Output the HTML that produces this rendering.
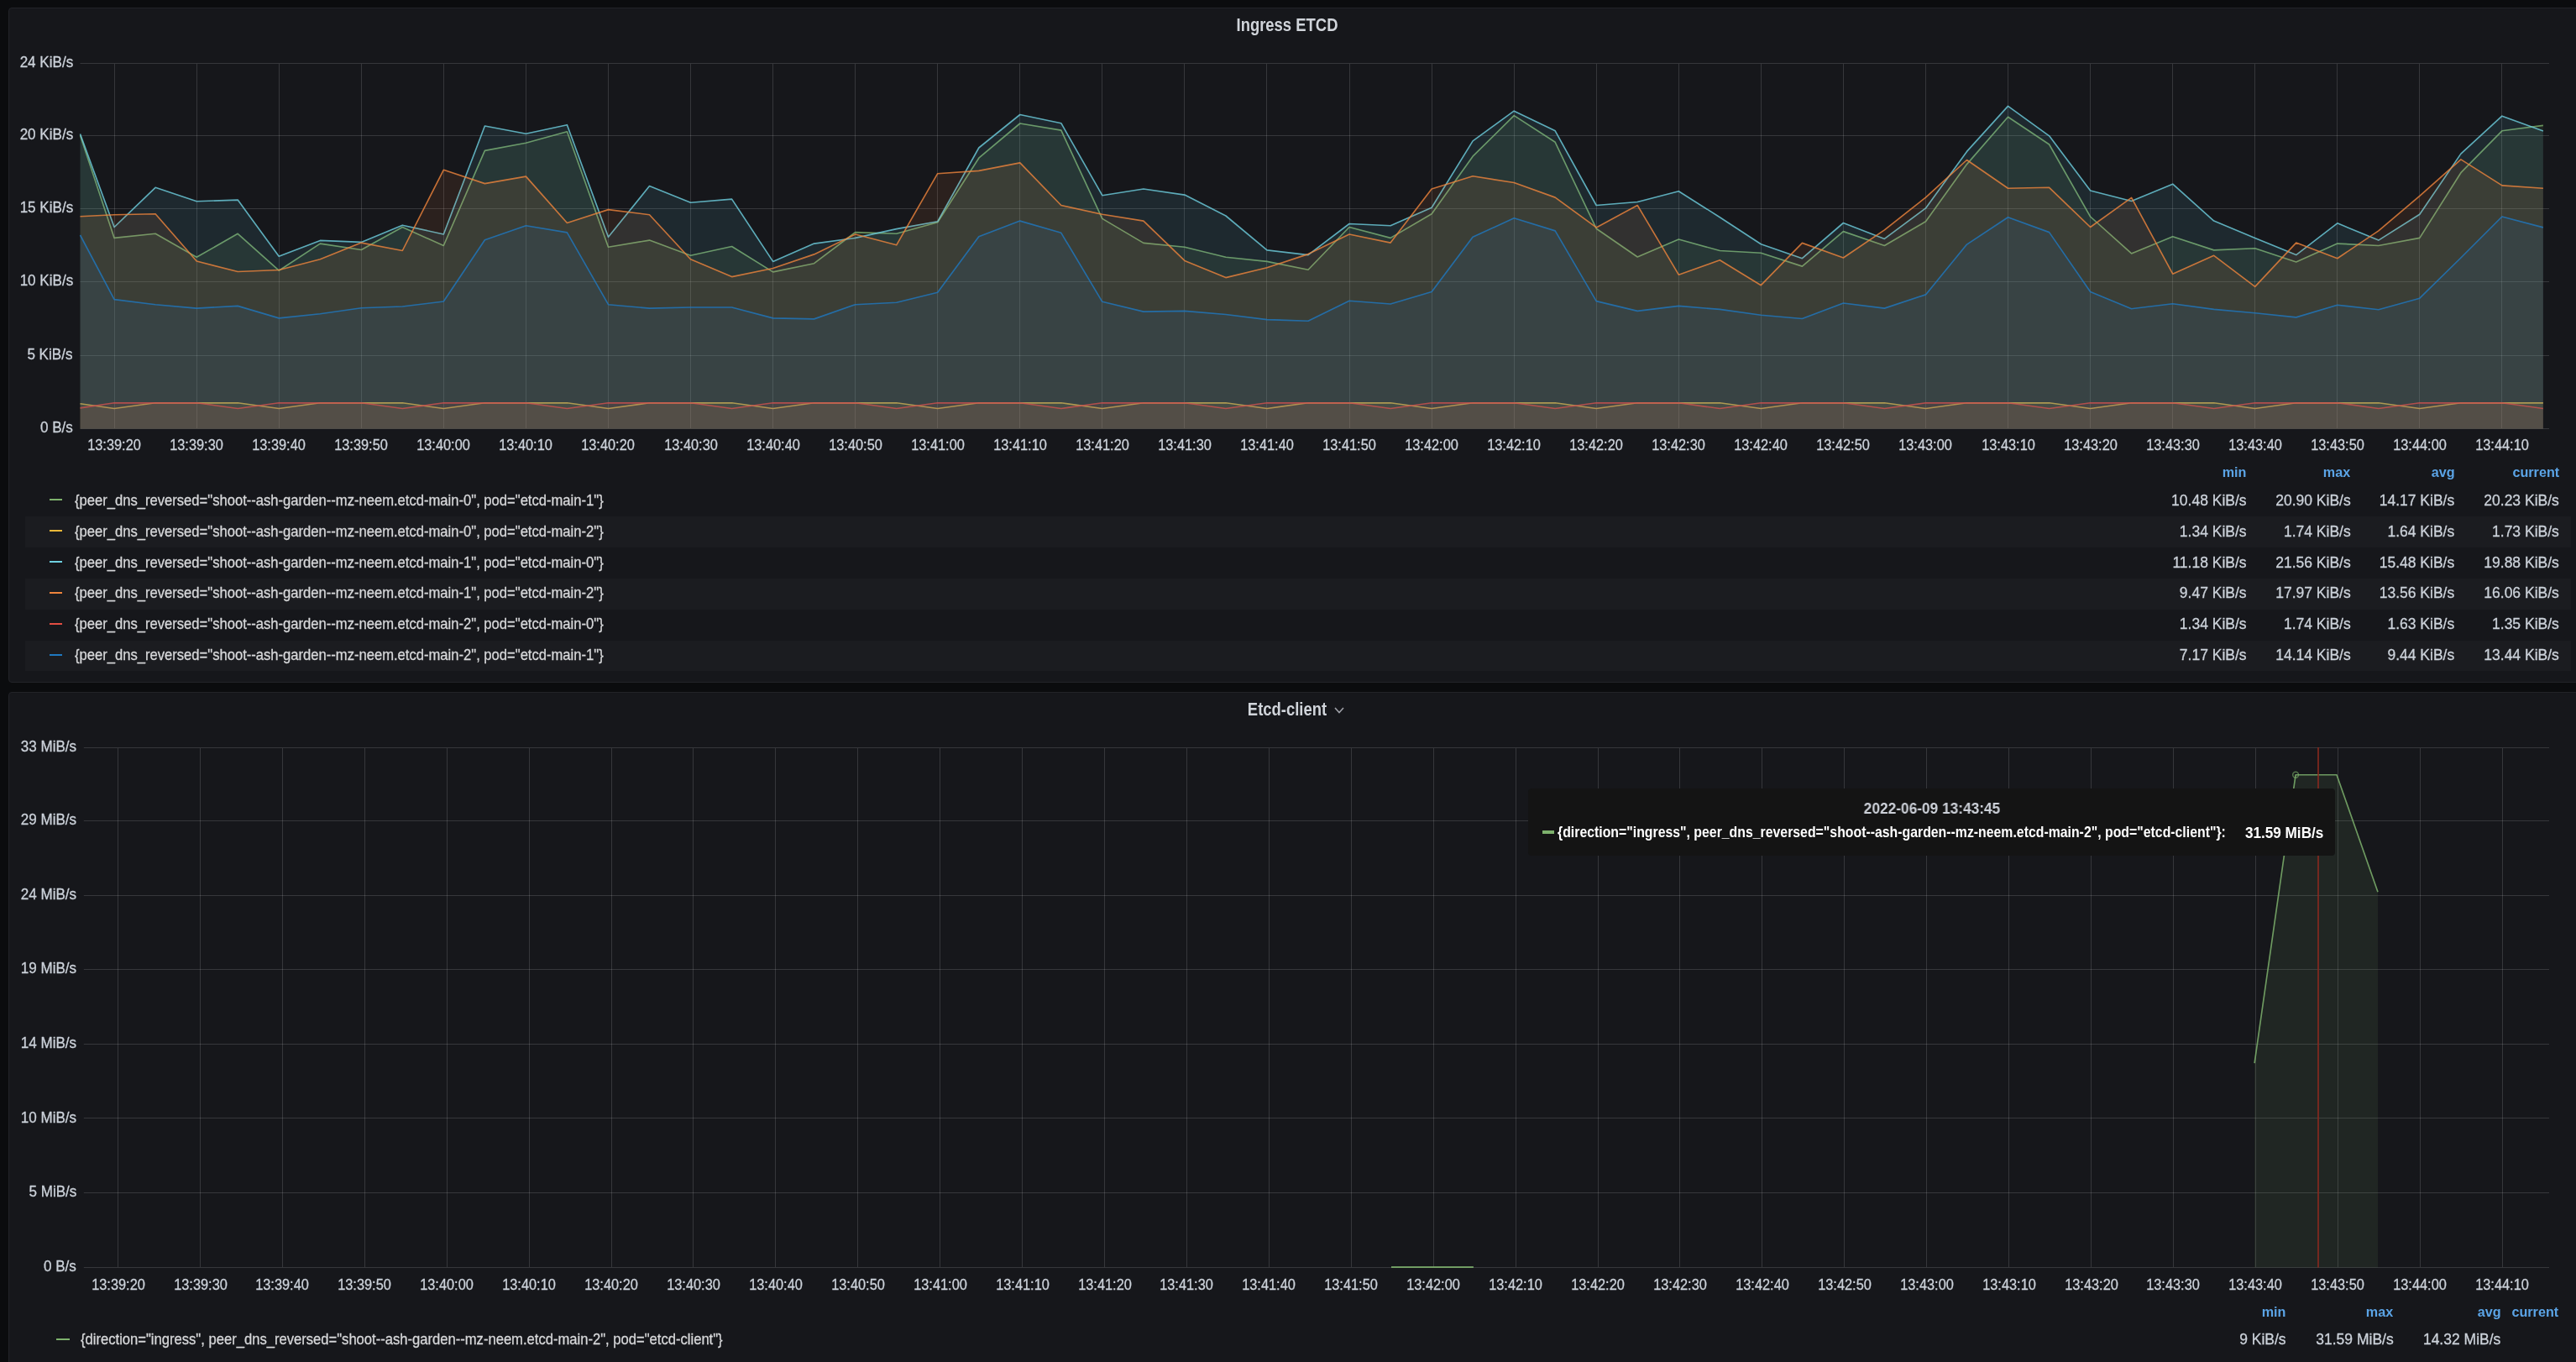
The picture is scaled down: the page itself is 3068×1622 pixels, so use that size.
<!DOCTYPE html><html><head><meta charset="utf-8"><style>
*{margin:0;padding:0;box-sizing:border-box}
html,body{width:3068px;height:1622px;overflow:hidden;background:#0b0c0e;font-family:"Liberation Sans", sans-serif}
.panel{position:absolute;background:#16171b;border:1px solid #222328;border-radius:4px}
.stripe{position:absolute;background:#1b1c20}
.mk{position:absolute}
#txt{position:absolute;left:0;top:0;width:3068px;height:1622px;will-change:transform}
.t{position:absolute;white-space:pre;line-height:1;top:0}
</style></head><body>
<div class="panel" style="left:10px;top:9px;width:3080px;height:804px"></div>
<div class="panel" style="left:10px;top:824px;width:3080px;height:820px"></div>
<div class="stripe" style="left:30px;top:615.1px;width:3032px;height:36.9px"></div>
<div class="stripe" style="left:30px;top:688.8px;width:3032px;height:36.9px"></div>
<div class="stripe" style="left:30px;top:762.5px;width:3032px;height:36.9px"></div>
<svg width="3068" height="1622" style="position:absolute;left:0;top:0">
<line x1="95.5" y1="75.5" x2="3036" y2="75.5" stroke="rgba(255,255,255,0.14)" stroke-width="1"/>
<line x1="95.5" y1="161.5" x2="3036" y2="161.5" stroke="rgba(255,255,255,0.14)" stroke-width="1"/>
<line x1="95.5" y1="248.5" x2="3036" y2="248.5" stroke="rgba(255,255,255,0.14)" stroke-width="1"/>
<line x1="95.5" y1="335.5" x2="3036" y2="335.5" stroke="rgba(255,255,255,0.14)" stroke-width="1"/>
<line x1="95.5" y1="423.5" x2="3036" y2="423.5" stroke="rgba(255,255,255,0.14)" stroke-width="1"/>
<line x1="95.5" y1="510.5" x2="3036" y2="510.5" stroke="rgba(255,255,255,0.14)" stroke-width="1"/>
<line x1="136.5" y1="76" x2="136.5" y2="510" stroke="rgba(255,255,255,0.14)" stroke-width="1"/>
<line x1="234.5" y1="76" x2="234.5" y2="510" stroke="rgba(255,255,255,0.14)" stroke-width="1"/>
<line x1="332.5" y1="76" x2="332.5" y2="510" stroke="rgba(255,255,255,0.14)" stroke-width="1"/>
<line x1="430.5" y1="76" x2="430.5" y2="510" stroke="rgba(255,255,255,0.14)" stroke-width="1"/>
<line x1="528.5" y1="76" x2="528.5" y2="510" stroke="rgba(255,255,255,0.14)" stroke-width="1"/>
<line x1="626.5" y1="76" x2="626.5" y2="510" stroke="rgba(255,255,255,0.14)" stroke-width="1"/>
<line x1="724.5" y1="76" x2="724.5" y2="510" stroke="rgba(255,255,255,0.14)" stroke-width="1"/>
<line x1="822.5" y1="76" x2="822.5" y2="510" stroke="rgba(255,255,255,0.14)" stroke-width="1"/>
<line x1="920.5" y1="76" x2="920.5" y2="510" stroke="rgba(255,255,255,0.14)" stroke-width="1"/>
<line x1="1018.5" y1="76" x2="1018.5" y2="510" stroke="rgba(255,255,255,0.14)" stroke-width="1"/>
<line x1="1116.5" y1="76" x2="1116.5" y2="510" stroke="rgba(255,255,255,0.14)" stroke-width="1"/>
<line x1="1214.5" y1="76" x2="1214.5" y2="510" stroke="rgba(255,255,255,0.14)" stroke-width="1"/>
<line x1="1312.5" y1="76" x2="1312.5" y2="510" stroke="rgba(255,255,255,0.14)" stroke-width="1"/>
<line x1="1410.5" y1="76" x2="1410.5" y2="510" stroke="rgba(255,255,255,0.14)" stroke-width="1"/>
<line x1="1508.5" y1="76" x2="1508.5" y2="510" stroke="rgba(255,255,255,0.14)" stroke-width="1"/>
<line x1="1607.5" y1="76" x2="1607.5" y2="510" stroke="rgba(255,255,255,0.14)" stroke-width="1"/>
<line x1="1705.5" y1="76" x2="1705.5" y2="510" stroke="rgba(255,255,255,0.14)" stroke-width="1"/>
<line x1="1803.5" y1="76" x2="1803.5" y2="510" stroke="rgba(255,255,255,0.14)" stroke-width="1"/>
<line x1="1901.5" y1="76" x2="1901.5" y2="510" stroke="rgba(255,255,255,0.14)" stroke-width="1"/>
<line x1="1999.5" y1="76" x2="1999.5" y2="510" stroke="rgba(255,255,255,0.14)" stroke-width="1"/>
<line x1="2097.5" y1="76" x2="2097.5" y2="510" stroke="rgba(255,255,255,0.14)" stroke-width="1"/>
<line x1="2195.5" y1="76" x2="2195.5" y2="510" stroke="rgba(255,255,255,0.14)" stroke-width="1"/>
<line x1="2293.5" y1="76" x2="2293.5" y2="510" stroke="rgba(255,255,255,0.14)" stroke-width="1"/>
<line x1="2391.5" y1="76" x2="2391.5" y2="510" stroke="rgba(255,255,255,0.14)" stroke-width="1"/>
<line x1="2489.5" y1="76" x2="2489.5" y2="510" stroke="rgba(255,255,255,0.14)" stroke-width="1"/>
<line x1="2587.5" y1="76" x2="2587.5" y2="510" stroke="rgba(255,255,255,0.14)" stroke-width="1"/>
<line x1="2685.5" y1="76" x2="2685.5" y2="510" stroke="rgba(255,255,255,0.14)" stroke-width="1"/>
<line x1="2783.5" y1="76" x2="2783.5" y2="510" stroke="rgba(255,255,255,0.14)" stroke-width="1"/>
<line x1="2881.5" y1="76" x2="2881.5" y2="510" stroke="rgba(255,255,255,0.14)" stroke-width="1"/>
<line x1="2979.5" y1="76" x2="2979.5" y2="510" stroke="rgba(255,255,255,0.14)" stroke-width="1"/>
<polygon points="95.5,161.2 136.1,283.4 185.1,278.3 234.2,306.3 283.2,278.3 332.2,322.2 381.3,290.1 430.3,297.5 479.3,270.5 528.3,292.5 577.4,179.4 626.4,170.3 675.4,156.8 724.5,294.2 773.5,286.1 822.5,304.3 871.6,293.5 920.6,323.9 969.6,313.7 1018.7,276.6 1067.7,278.3 1116.7,264.8 1165.8,188.2 1214.8,147.0 1263.8,155.1 1312.8,260.4 1361.9,289.4 1410.9,294.2 1459.9,306.3 1509.0,311.4 1558.0,321.2 1607.0,270.5 1656.1,283.4 1705.1,254.7 1754.1,186.2 1803.2,137.6 1852.2,169.3 1901.2,272.2 1950.2,306.0 1999.3,285.0 2048.3,298.5 2097.3,301.2 2146.4,317.1 2195.4,275.6 2244.4,292.5 2293.5,263.8 2342.5,195.6 2391.5,139.2 2440.6,172.0 2489.6,258.0 2538.6,301.9 2587.7,281.7 2636.7,297.9 2685.7,295.8 2734.7,312.0 2783.8,290.1 2832.8,292.5 2881.8,283.4 2930.9,205.7 2979.9,155.8 3028.9,149.4 3028.9,510.5 95.5,510.5" fill="#7EB26D" fill-opacity="0.1"/>
<polyline points="95.5,161.2 136.1,283.4 185.1,278.3 234.2,306.3 283.2,278.3 332.2,322.2 381.3,290.1 430.3,297.5 479.3,270.5 528.3,292.5 577.4,179.4 626.4,170.3 675.4,156.8 724.5,294.2 773.5,286.1 822.5,304.3 871.6,293.5 920.6,323.9 969.6,313.7 1018.7,276.6 1067.7,278.3 1116.7,264.8 1165.8,188.2 1214.8,147.0 1263.8,155.1 1312.8,260.4 1361.9,289.4 1410.9,294.2 1459.9,306.3 1509.0,311.4 1558.0,321.2 1607.0,270.5 1656.1,283.4 1705.1,254.7 1754.1,186.2 1803.2,137.6 1852.2,169.3 1901.2,272.2 1950.2,306.0 1999.3,285.0 2048.3,298.5 2097.3,301.2 2146.4,317.1 2195.4,275.6 2244.4,292.5 2293.5,263.8 2342.5,195.6 2391.5,139.2 2440.6,172.0 2489.6,258.0 2538.6,301.9 2587.7,281.7 2636.7,297.9 2685.7,295.8 2734.7,312.0 2783.8,290.1 2832.8,292.5 2881.8,283.4 2930.9,205.7 2979.9,155.8 3028.9,149.4" fill="none" stroke="#7EB26D" stroke-width="1.65" stroke-opacity="0.8" stroke-linejoin="round"/>
<polygon points="95.5,480.8 136.1,486.5 185.1,479.8 234.2,479.8 283.2,479.8 332.2,486.5 381.3,479.8 430.3,479.8 479.3,479.8 528.3,486.5 577.4,479.8 626.4,479.8 675.4,479.8 724.5,486.5 773.5,479.8 822.5,479.8 871.6,479.8 920.6,486.5 969.6,479.8 1018.7,479.8 1067.7,479.8 1116.7,486.5 1165.8,479.8 1214.8,479.8 1263.8,479.8 1312.8,486.5 1361.9,479.8 1410.9,479.8 1459.9,479.8 1509.0,486.5 1558.0,479.8 1607.0,479.8 1656.1,479.8 1705.1,486.5 1754.1,479.8 1803.2,479.8 1852.2,479.8 1901.2,486.5 1950.2,479.8 1999.3,479.8 2048.3,479.8 2097.3,486.5 2146.4,479.8 2195.4,479.8 2244.4,479.8 2293.5,486.5 2342.5,479.8 2391.5,479.8 2440.6,479.8 2489.6,486.5 2538.6,479.8 2587.7,479.8 2636.7,479.8 2685.7,486.5 2734.7,479.8 2783.8,479.8 2832.8,479.8 2881.8,486.5 2930.9,479.8 2979.9,479.8 3028.9,479.8 3028.9,510.5 95.5,510.5" fill="#EAB839" fill-opacity="0.1"/>
<polyline points="95.5,480.8 136.1,486.5 185.1,479.8 234.2,479.8 283.2,479.8 332.2,486.5 381.3,479.8 430.3,479.8 479.3,479.8 528.3,486.5 577.4,479.8 626.4,479.8 675.4,479.8 724.5,486.5 773.5,479.8 822.5,479.8 871.6,479.8 920.6,486.5 969.6,479.8 1018.7,479.8 1067.7,479.8 1116.7,486.5 1165.8,479.8 1214.8,479.8 1263.8,479.8 1312.8,486.5 1361.9,479.8 1410.9,479.8 1459.9,479.8 1509.0,486.5 1558.0,479.8 1607.0,479.8 1656.1,479.8 1705.1,486.5 1754.1,479.8 1803.2,479.8 1852.2,479.8 1901.2,486.5 1950.2,479.8 1999.3,479.8 2048.3,479.8 2097.3,486.5 2146.4,479.8 2195.4,479.8 2244.4,479.8 2293.5,486.5 2342.5,479.8 2391.5,479.8 2440.6,479.8 2489.6,486.5 2538.6,479.8 2587.7,479.8 2636.7,479.8 2685.7,486.5 2734.7,479.8 2783.8,479.8 2832.8,479.8 2881.8,486.5 2930.9,479.8 2979.9,479.8 3028.9,479.8" fill="none" stroke="#EAB839" stroke-width="1.65" stroke-opacity="0.8" stroke-linejoin="round"/>
<polygon points="95.5,159.5 136.1,270.5 185.1,223.3 234.2,239.8 283.2,238.1 332.2,305.3 381.3,286.4 430.3,288.4 479.3,268.2 528.3,279.0 577.4,150.0 626.4,159.2 675.4,148.7 724.5,282.3 773.5,221.6 822.5,241.2 871.6,237.1 920.6,311.4 969.6,290.1 1018.7,283.4 1067.7,272.6 1116.7,263.8 1165.8,176.0 1214.8,136.5 1263.8,146.7 1312.8,232.7 1361.9,225.0 1410.9,232.1 1459.9,257.0 1509.0,297.9 1558.0,303.6 1607.0,266.5 1656.1,268.8 1705.1,247.2 1754.1,167.9 1803.2,132.2 1852.2,155.8 1901.2,244.5 1950.2,240.5 1999.3,227.7 2048.3,258.7 2097.3,290.8 2146.4,307.7 2195.4,265.5 2244.4,284.4 2293.5,247.9 2342.5,180.4 2391.5,126.4 2440.6,161.8 2489.6,227.0 2538.6,239.5 2587.7,219.2 2636.7,263.1 2685.7,283.4 2734.7,303.6 2783.8,265.8 2832.8,286.1 2881.8,255.3 2930.9,183.1 2979.9,138.2 3028.9,156.1 3028.9,510.5 95.5,510.5" fill="#6ED0E0" fill-opacity="0.1"/>
<polyline points="95.5,159.5 136.1,270.5 185.1,223.3 234.2,239.8 283.2,238.1 332.2,305.3 381.3,286.4 430.3,288.4 479.3,268.2 528.3,279.0 577.4,150.0 626.4,159.2 675.4,148.7 724.5,282.3 773.5,221.6 822.5,241.2 871.6,237.1 920.6,311.4 969.6,290.1 1018.7,283.4 1067.7,272.6 1116.7,263.8 1165.8,176.0 1214.8,136.5 1263.8,146.7 1312.8,232.7 1361.9,225.0 1410.9,232.1 1459.9,257.0 1509.0,297.9 1558.0,303.6 1607.0,266.5 1656.1,268.8 1705.1,247.2 1754.1,167.9 1803.2,132.2 1852.2,155.8 1901.2,244.5 1950.2,240.5 1999.3,227.7 2048.3,258.7 2097.3,290.8 2146.4,307.7 2195.4,265.5 2244.4,284.4 2293.5,247.9 2342.5,180.4 2391.5,126.4 2440.6,161.8 2489.6,227.0 2538.6,239.5 2587.7,219.2 2636.7,263.1 2685.7,283.4 2734.7,303.6 2783.8,265.8 2832.8,286.1 2881.8,255.3 2930.9,183.1 2979.9,138.2 3028.9,156.1" fill="none" stroke="#6ED0E0" stroke-width="1.65" stroke-opacity="0.8" stroke-linejoin="round"/>
<polygon points="95.5,257.7 136.1,255.7 185.1,254.7 234.2,311.0 283.2,323.5 332.2,321.5 381.3,308.7 430.3,289.1 479.3,298.5 528.3,202.3 577.4,218.6 626.4,210.1 675.4,265.5 724.5,249.6 773.5,255.7 822.5,308.7 871.6,329.6 920.6,319.5 969.6,302.9 1018.7,279.0 1067.7,291.8 1116.7,206.7 1165.8,203.4 1214.8,193.9 1263.8,244.5 1312.8,255.3 1361.9,263.1 1410.9,310.4 1459.9,330.6 1509.0,318.8 1558.0,302.6 1607.0,279.0 1656.1,289.1 1705.1,225.0 1754.1,209.8 1803.2,217.5 1852.2,235.1 1901.2,270.9 1950.2,244.5 1999.3,327.2 2048.3,309.7 2097.3,339.7 2146.4,289.4 2195.4,307.0 2244.4,273.9 2293.5,235.1 2342.5,190.5 2391.5,224.3 2440.6,223.3 2489.6,270.5 2538.6,235.4 2587.7,326.2 2636.7,304.3 2685.7,341.4 2734.7,289.1 2783.8,307.7 2832.8,274.9 2881.8,233.4 2930.9,189.9 2979.9,220.9 3028.9,224.3 3028.9,510.5 95.5,510.5" fill="#EF843C" fill-opacity="0.1"/>
<polyline points="95.5,257.7 136.1,255.7 185.1,254.7 234.2,311.0 283.2,323.5 332.2,321.5 381.3,308.7 430.3,289.1 479.3,298.5 528.3,202.3 577.4,218.6 626.4,210.1 675.4,265.5 724.5,249.6 773.5,255.7 822.5,308.7 871.6,329.6 920.6,319.5 969.6,302.9 1018.7,279.0 1067.7,291.8 1116.7,206.7 1165.8,203.4 1214.8,193.9 1263.8,244.5 1312.8,255.3 1361.9,263.1 1410.9,310.4 1459.9,330.6 1509.0,318.8 1558.0,302.6 1607.0,279.0 1656.1,289.1 1705.1,225.0 1754.1,209.8 1803.2,217.5 1852.2,235.1 1901.2,270.9 1950.2,244.5 1999.3,327.2 2048.3,309.7 2097.3,339.7 2146.4,289.4 2195.4,307.0 2244.4,273.9 2293.5,235.1 2342.5,190.5 2391.5,224.3 2440.6,223.3 2489.6,270.5 2538.6,235.4 2587.7,326.2 2636.7,304.3 2685.7,341.4 2734.7,289.1 2783.8,307.7 2832.8,274.9 2881.8,233.4 2930.9,189.9 2979.9,220.9 3028.9,224.3" fill="none" stroke="#EF843C" stroke-width="1.65" stroke-opacity="0.8" stroke-linejoin="round"/>
<polygon points="95.5,485.9 136.1,479.8 185.1,479.8 234.2,479.8 283.2,486.5 332.2,479.8 381.3,479.8 430.3,479.8 479.3,486.5 528.3,479.8 577.4,479.8 626.4,479.8 675.4,486.5 724.5,479.8 773.5,479.8 822.5,479.8 871.6,486.5 920.6,479.8 969.6,479.8 1018.7,479.8 1067.7,486.5 1116.7,479.8 1165.8,479.8 1214.8,479.8 1263.8,486.5 1312.8,479.8 1361.9,479.8 1410.9,479.8 1459.9,486.5 1509.0,479.8 1558.0,479.8 1607.0,479.8 1656.1,486.5 1705.1,479.8 1754.1,479.8 1803.2,479.8 1852.2,486.5 1901.2,479.8 1950.2,479.8 1999.3,479.8 2048.3,486.5 2097.3,479.8 2146.4,479.8 2195.4,479.8 2244.4,486.5 2293.5,479.8 2342.5,479.8 2391.5,479.8 2440.6,486.5 2489.6,479.8 2538.6,479.8 2587.7,479.8 2636.7,486.5 2685.7,479.8 2734.7,479.8 2783.8,479.8 2832.8,486.5 2881.8,479.8 2930.9,479.8 2979.9,479.8 3028.9,486.5 3028.9,510.5 95.5,510.5" fill="#E24D42" fill-opacity="0.1"/>
<polyline points="95.5,485.9 136.1,479.8 185.1,479.8 234.2,479.8 283.2,486.5 332.2,479.8 381.3,479.8 430.3,479.8 479.3,486.5 528.3,479.8 577.4,479.8 626.4,479.8 675.4,486.5 724.5,479.8 773.5,479.8 822.5,479.8 871.6,486.5 920.6,479.8 969.6,479.8 1018.7,479.8 1067.7,486.5 1116.7,479.8 1165.8,479.8 1214.8,479.8 1263.8,486.5 1312.8,479.8 1361.9,479.8 1410.9,479.8 1459.9,486.5 1509.0,479.8 1558.0,479.8 1607.0,479.8 1656.1,486.5 1705.1,479.8 1754.1,479.8 1803.2,479.8 1852.2,486.5 1901.2,479.8 1950.2,479.8 1999.3,479.8 2048.3,486.5 2097.3,479.8 2146.4,479.8 2195.4,479.8 2244.4,486.5 2293.5,479.8 2342.5,479.8 2391.5,479.8 2440.6,486.5 2489.6,479.8 2538.6,479.8 2587.7,479.8 2636.7,486.5 2685.7,479.8 2734.7,479.8 2783.8,479.8 2832.8,486.5 2881.8,479.8 2930.9,479.8 2979.9,479.8 3028.9,486.5" fill="none" stroke="#E24D42" stroke-width="1.65" stroke-opacity="0.8" stroke-linejoin="round"/>
<polygon points="95.5,280.0 136.1,356.6 185.1,362.7 234.2,367.1 283.2,364.4 332.2,378.9 381.3,373.8 430.3,366.7 479.3,365.0 528.3,359.0 577.4,285.7 626.4,268.8 675.4,276.9 724.5,362.7 773.5,367.1 822.5,366.0 871.6,366.0 920.6,378.9 969.6,379.9 1018.7,362.7 1067.7,360.3 1116.7,348.2 1165.8,281.7 1214.8,263.1 1263.8,277.3 1312.8,359.3 1361.9,371.1 1410.9,370.4 1459.9,374.5 1509.0,380.6 1558.0,382.2 1607.0,358.3 1656.1,362.0 1705.1,347.5 1754.1,282.3 1803.2,259.7 1852.2,274.9 1901.2,358.6 1950.2,370.4 1999.3,364.4 2048.3,368.4 2097.3,375.2 2146.4,379.5 2195.4,361.0 2244.4,367.1 2293.5,350.9 2342.5,291.1 2391.5,258.7 2440.6,276.6 2489.6,347.5 2538.6,367.7 2587.7,361.7 2636.7,368.4 2685.7,372.8 2734.7,377.9 2783.8,363.3 2832.8,368.7 2881.8,355.2 2930.9,307.0 2979.9,258.0 3028.9,270.9 3028.9,510.5 95.5,510.5" fill="#1F78C1" fill-opacity="0.1"/>
<polyline points="95.5,280.0 136.1,356.6 185.1,362.7 234.2,367.1 283.2,364.4 332.2,378.9 381.3,373.8 430.3,366.7 479.3,365.0 528.3,359.0 577.4,285.7 626.4,268.8 675.4,276.9 724.5,362.7 773.5,367.1 822.5,366.0 871.6,366.0 920.6,378.9 969.6,379.9 1018.7,362.7 1067.7,360.3 1116.7,348.2 1165.8,281.7 1214.8,263.1 1263.8,277.3 1312.8,359.3 1361.9,371.1 1410.9,370.4 1459.9,374.5 1509.0,380.6 1558.0,382.2 1607.0,358.3 1656.1,362.0 1705.1,347.5 1754.1,282.3 1803.2,259.7 1852.2,274.9 1901.2,358.6 1950.2,370.4 1999.3,364.4 2048.3,368.4 2097.3,375.2 2146.4,379.5 2195.4,361.0 2244.4,367.1 2293.5,350.9 2342.5,291.1 2391.5,258.7 2440.6,276.6 2489.6,347.5 2538.6,367.7 2587.7,361.7 2636.7,368.4 2685.7,372.8 2734.7,377.9 2783.8,363.3 2832.8,368.7 2881.8,355.2 2930.9,307.0 2979.9,258.0 3028.9,270.9" fill="none" stroke="#1F78C1" stroke-width="1.65" stroke-opacity="0.8" stroke-linejoin="round"/>
<line x1="99.8" y1="890.5" x2="3036" y2="890.5" stroke="rgba(255,255,255,0.14)" stroke-width="1"/>
<line x1="99.8" y1="977.5" x2="3036" y2="977.5" stroke="rgba(255,255,255,0.14)" stroke-width="1"/>
<line x1="99.8" y1="1066.5" x2="3036" y2="1066.5" stroke="rgba(255,255,255,0.14)" stroke-width="1"/>
<line x1="99.8" y1="1154.5" x2="3036" y2="1154.5" stroke="rgba(255,255,255,0.14)" stroke-width="1"/>
<line x1="99.8" y1="1243.5" x2="3036" y2="1243.5" stroke="rgba(255,255,255,0.14)" stroke-width="1"/>
<line x1="99.8" y1="1331.5" x2="3036" y2="1331.5" stroke="rgba(255,255,255,0.14)" stroke-width="1"/>
<line x1="99.8" y1="1420.5" x2="3036" y2="1420.5" stroke="rgba(255,255,255,0.14)" stroke-width="1"/>
<line x1="99.8" y1="1509.5" x2="3036" y2="1509.5" stroke="rgba(255,255,255,0.14)" stroke-width="1"/>
<line x1="140.5" y1="891" x2="140.5" y2="1509" stroke="rgba(255,255,255,0.14)" stroke-width="1"/>
<line x1="238.5" y1="891" x2="238.5" y2="1509" stroke="rgba(255,255,255,0.14)" stroke-width="1"/>
<line x1="336.5" y1="891" x2="336.5" y2="1509" stroke="rgba(255,255,255,0.14)" stroke-width="1"/>
<line x1="434.5" y1="891" x2="434.5" y2="1509" stroke="rgba(255,255,255,0.14)" stroke-width="1"/>
<line x1="532.5" y1="891" x2="532.5" y2="1509" stroke="rgba(255,255,255,0.14)" stroke-width="1"/>
<line x1="630.5" y1="891" x2="630.5" y2="1509" stroke="rgba(255,255,255,0.14)" stroke-width="1"/>
<line x1="728.5" y1="891" x2="728.5" y2="1509" stroke="rgba(255,255,255,0.14)" stroke-width="1"/>
<line x1="825.5" y1="891" x2="825.5" y2="1509" stroke="rgba(255,255,255,0.14)" stroke-width="1"/>
<line x1="923.5" y1="891" x2="923.5" y2="1509" stroke="rgba(255,255,255,0.14)" stroke-width="1"/>
<line x1="1021.5" y1="891" x2="1021.5" y2="1509" stroke="rgba(255,255,255,0.14)" stroke-width="1"/>
<line x1="1119.5" y1="891" x2="1119.5" y2="1509" stroke="rgba(255,255,255,0.14)" stroke-width="1"/>
<line x1="1217.5" y1="891" x2="1217.5" y2="1509" stroke="rgba(255,255,255,0.14)" stroke-width="1"/>
<line x1="1315.5" y1="891" x2="1315.5" y2="1509" stroke="rgba(255,255,255,0.14)" stroke-width="1"/>
<line x1="1413.5" y1="891" x2="1413.5" y2="1509" stroke="rgba(255,255,255,0.14)" stroke-width="1"/>
<line x1="1511.5" y1="891" x2="1511.5" y2="1509" stroke="rgba(255,255,255,0.14)" stroke-width="1"/>
<line x1="1609.5" y1="891" x2="1609.5" y2="1509" stroke="rgba(255,255,255,0.14)" stroke-width="1"/>
<line x1="1707.5" y1="891" x2="1707.5" y2="1509" stroke="rgba(255,255,255,0.14)" stroke-width="1"/>
<line x1="1805.5" y1="891" x2="1805.5" y2="1509" stroke="rgba(255,255,255,0.14)" stroke-width="1"/>
<line x1="1903.5" y1="891" x2="1903.5" y2="1509" stroke="rgba(255,255,255,0.14)" stroke-width="1"/>
<line x1="2000.5" y1="891" x2="2000.5" y2="1509" stroke="rgba(255,255,255,0.14)" stroke-width="1"/>
<line x1="2098.5" y1="891" x2="2098.5" y2="1509" stroke="rgba(255,255,255,0.14)" stroke-width="1"/>
<line x1="2196.5" y1="891" x2="2196.5" y2="1509" stroke="rgba(255,255,255,0.14)" stroke-width="1"/>
<line x1="2294.5" y1="891" x2="2294.5" y2="1509" stroke="rgba(255,255,255,0.14)" stroke-width="1"/>
<line x1="2392.5" y1="891" x2="2392.5" y2="1509" stroke="rgba(255,255,255,0.14)" stroke-width="1"/>
<line x1="2490.5" y1="891" x2="2490.5" y2="1509" stroke="rgba(255,255,255,0.14)" stroke-width="1"/>
<line x1="2588.5" y1="891" x2="2588.5" y2="1509" stroke="rgba(255,255,255,0.14)" stroke-width="1"/>
<line x1="2686.5" y1="891" x2="2686.5" y2="1509" stroke="rgba(255,255,255,0.14)" stroke-width="1"/>
<line x1="2784.5" y1="891" x2="2784.5" y2="1509" stroke="rgba(255,255,255,0.14)" stroke-width="1"/>
<line x1="2882.5" y1="891" x2="2882.5" y2="1509" stroke="rgba(255,255,255,0.14)" stroke-width="1"/>
<line x1="2980.5" y1="891" x2="2980.5" y2="1509" stroke="rgba(255,255,255,0.14)" stroke-width="1"/>
<polygon points="2685.1,1266.1 2734.1,922.7 2783.0,922.7 2832.0,1062.2 2832.0,1509.4 2685.1,1509.4" fill="#7EB26D" fill-opacity="0.1"/>
<polyline points="2685.1,1266.1 2734.1,922.7 2783.0,922.7 2832.0,1062.2" fill="none" stroke="#7EB26D" stroke-width="1.65" stroke-opacity="0.85" stroke-linejoin="round"/>
<line x1="1657.0" y1="1509" x2="1754.9" y2="1509" stroke="#7EB26D" stroke-opacity="0.85" stroke-width="2"/>
<line x1="2761.0" y1="890" x2="2761.0" y2="1509.4" stroke="#8a2a1f" stroke-width="1.6"/>
<circle cx="2734.1" cy="922.7" r="3.4" fill="none" stroke="#7EB26D" stroke-opacity="0.6" stroke-width="1.5"/>
</svg>
<div style="position:absolute;left:1820px;top:939px;width:961px;height:80px;background:#141414;border-radius:4px"></div>
<div class="mk" style="left:1837px;top:989px;width:14px;height:4px;background:#7EB26D"></div>
<div class="mk" style="left:59px;top:594.4px;width:15px;height:2px;background:#7EB26D"></div>
<div class="mk" style="left:59px;top:631.2px;width:15px;height:2px;background:#EAB839"></div>
<div class="mk" style="left:59px;top:668.1px;width:15px;height:2px;background:#6ED0E0"></div>
<div class="mk" style="left:59px;top:705.0px;width:15px;height:2px;background:#EF843C"></div>
<div class="mk" style="left:59px;top:741.8px;width:15px;height:2px;background:#E24D42"></div>
<div class="mk" style="left:59px;top:778.6px;width:15px;height:2px;background:#1F78C1"></div>
<div class="mk" style="left:66.5px;top:1594px;width:16px;height:2px;background:#7EB26D"></div>
<svg style="position:absolute;left:1588px;top:841px" width="14" height="10"><polyline points="2,2 7,7.5 12,2" fill="none" stroke="#9fa1a8" stroke-width="1.6"/></svg>
<div id="txt">
<div class="t" style="left:533.00px;width:2000px;text-align:center;top:19.80px;font-size:21.5px;color:#d0d4da;font-weight:bold;transform:scaleX(0.858);transform-origin:center top;">Ingress ETCD</div>
<div class="t" style="left:533.40px;width:2000px;text-align:center;top:834.60px;font-size:21.5px;color:#d0d4da;font-weight:bold;transform:scaleX(0.858);transform-origin:center top;">Etcd-client</div>
<div class="t" style="right:2981.20px;top:65.79px;font-size:17.5px;color:#ccd2da;font-weight:normal;transform:scaleX(0.975);transform-origin:right top;-webkit-text-stroke:0.3px #ccd2da;">24 KiB/s</div>
<div class="t" style="right:2981.20px;top:151.69px;font-size:17.5px;color:#ccd2da;font-weight:normal;transform:scaleX(0.975);transform-origin:right top;-webkit-text-stroke:0.3px #ccd2da;">20 KiB/s</div>
<div class="t" style="right:2981.20px;top:238.99px;font-size:17.5px;color:#ccd2da;font-weight:normal;transform:scaleX(0.975);transform-origin:right top;-webkit-text-stroke:0.3px #ccd2da;">15 KiB/s</div>
<div class="t" style="right:2981.20px;top:326.29px;font-size:17.5px;color:#ccd2da;font-weight:normal;transform:scaleX(0.975);transform-origin:right top;-webkit-text-stroke:0.3px #ccd2da;">10 KiB/s</div>
<div class="t" style="right:2981.20px;top:413.59px;font-size:17.5px;color:#ccd2da;font-weight:normal;transform:scaleX(0.975);transform-origin:right top;-webkit-text-stroke:0.3px #ccd2da;">5 KiB/s</div>
<div class="t" style="right:2981.20px;top:500.89px;font-size:17.5px;color:#ccd2da;font-weight:normal;transform:scaleX(0.975);transform-origin:right top;-webkit-text-stroke:0.3px #ccd2da;">0 B/s</div>
<div class="t" style="right:2977.10px;top:880.99px;font-size:17.5px;color:#ccd2da;font-weight:normal;transform:scaleX(0.975);transform-origin:right top;-webkit-text-stroke:0.3px #ccd2da;">33 MiB/s</div>
<div class="t" style="right:2977.10px;top:968.09px;font-size:17.5px;color:#ccd2da;font-weight:normal;transform:scaleX(0.975);transform-origin:right top;-webkit-text-stroke:0.3px #ccd2da;">29 MiB/s</div>
<div class="t" style="right:2977.10px;top:1056.79px;font-size:17.5px;color:#ccd2da;font-weight:normal;transform:scaleX(0.975);transform-origin:right top;-webkit-text-stroke:0.3px #ccd2da;">24 MiB/s</div>
<div class="t" style="right:2977.10px;top:1145.39px;font-size:17.5px;color:#ccd2da;font-weight:normal;transform:scaleX(0.975);transform-origin:right top;-webkit-text-stroke:0.3px #ccd2da;">19 MiB/s</div>
<div class="t" style="right:2977.10px;top:1234.09px;font-size:17.5px;color:#ccd2da;font-weight:normal;transform:scaleX(0.975);transform-origin:right top;-webkit-text-stroke:0.3px #ccd2da;">14 MiB/s</div>
<div class="t" style="right:2977.10px;top:1322.69px;font-size:17.5px;color:#ccd2da;font-weight:normal;transform:scaleX(0.975);transform-origin:right top;-webkit-text-stroke:0.3px #ccd2da;">10 MiB/s</div>
<div class="t" style="right:2977.10px;top:1411.39px;font-size:17.5px;color:#ccd2da;font-weight:normal;transform:scaleX(0.975);transform-origin:right top;-webkit-text-stroke:0.3px #ccd2da;">5 MiB/s</div>
<div class="t" style="right:2977.10px;top:1500.19px;font-size:17.5px;color:#ccd2da;font-weight:normal;transform:scaleX(0.975);transform-origin:right top;-webkit-text-stroke:0.3px #ccd2da;">0 B/s</div>
<div class="t" style="left:-863.90px;width:2000px;text-align:center;top:521.89px;font-size:17.5px;color:#ccd2da;font-weight:normal;transform:scaleX(0.935);transform-origin:center top;-webkit-text-stroke:0.3px #ccd2da;">13:39:20</div>
<div class="t" style="left:-859.40px;width:2000px;text-align:center;top:1521.79px;font-size:17.5px;color:#ccd2da;font-weight:normal;transform:scaleX(0.935);transform-origin:center top;-webkit-text-stroke:0.3px #ccd2da;">13:39:20</div>
<div class="t" style="left:-765.84px;width:2000px;text-align:center;top:521.89px;font-size:17.5px;color:#ccd2da;font-weight:normal;transform:scaleX(0.935);transform-origin:center top;-webkit-text-stroke:0.3px #ccd2da;">13:39:30</div>
<div class="t" style="left:-761.49px;width:2000px;text-align:center;top:1521.79px;font-size:17.5px;color:#ccd2da;font-weight:normal;transform:scaleX(0.935);transform-origin:center top;-webkit-text-stroke:0.3px #ccd2da;">13:39:30</div>
<div class="t" style="left:-667.78px;width:2000px;text-align:center;top:521.89px;font-size:17.5px;color:#ccd2da;font-weight:normal;transform:scaleX(0.935);transform-origin:center top;-webkit-text-stroke:0.3px #ccd2da;">13:39:40</div>
<div class="t" style="left:-663.57px;width:2000px;text-align:center;top:1521.79px;font-size:17.5px;color:#ccd2da;font-weight:normal;transform:scaleX(0.935);transform-origin:center top;-webkit-text-stroke:0.3px #ccd2da;">13:39:40</div>
<div class="t" style="left:-569.71px;width:2000px;text-align:center;top:521.89px;font-size:17.5px;color:#ccd2da;font-weight:normal;transform:scaleX(0.935);transform-origin:center top;-webkit-text-stroke:0.3px #ccd2da;">13:39:50</div>
<div class="t" style="left:-565.66px;width:2000px;text-align:center;top:1521.79px;font-size:17.5px;color:#ccd2da;font-weight:normal;transform:scaleX(0.935);transform-origin:center top;-webkit-text-stroke:0.3px #ccd2da;">13:39:50</div>
<div class="t" style="left:-471.65px;width:2000px;text-align:center;top:521.89px;font-size:17.5px;color:#ccd2da;font-weight:normal;transform:scaleX(0.935);transform-origin:center top;-webkit-text-stroke:0.3px #ccd2da;">13:40:00</div>
<div class="t" style="left:-467.74px;width:2000px;text-align:center;top:1521.79px;font-size:17.5px;color:#ccd2da;font-weight:normal;transform:scaleX(0.935);transform-origin:center top;-webkit-text-stroke:0.3px #ccd2da;">13:40:00</div>
<div class="t" style="left:-373.59px;width:2000px;text-align:center;top:521.89px;font-size:17.5px;color:#ccd2da;font-weight:normal;transform:scaleX(0.935);transform-origin:center top;-webkit-text-stroke:0.3px #ccd2da;">13:40:10</div>
<div class="t" style="left:-369.83px;width:2000px;text-align:center;top:1521.79px;font-size:17.5px;color:#ccd2da;font-weight:normal;transform:scaleX(0.935);transform-origin:center top;-webkit-text-stroke:0.3px #ccd2da;">13:40:10</div>
<div class="t" style="left:-275.53px;width:2000px;text-align:center;top:521.89px;font-size:17.5px;color:#ccd2da;font-weight:normal;transform:scaleX(0.935);transform-origin:center top;-webkit-text-stroke:0.3px #ccd2da;">13:40:20</div>
<div class="t" style="left:-271.92px;width:2000px;text-align:center;top:1521.79px;font-size:17.5px;color:#ccd2da;font-weight:normal;transform:scaleX(0.935);transform-origin:center top;-webkit-text-stroke:0.3px #ccd2da;">13:40:20</div>
<div class="t" style="left:-177.47px;width:2000px;text-align:center;top:521.89px;font-size:17.5px;color:#ccd2da;font-weight:normal;transform:scaleX(0.935);transform-origin:center top;-webkit-text-stroke:0.3px #ccd2da;">13:40:30</div>
<div class="t" style="left:-174.00px;width:2000px;text-align:center;top:1521.79px;font-size:17.5px;color:#ccd2da;font-weight:normal;transform:scaleX(0.935);transform-origin:center top;-webkit-text-stroke:0.3px #ccd2da;">13:40:30</div>
<div class="t" style="left:-79.40px;width:2000px;text-align:center;top:521.89px;font-size:17.5px;color:#ccd2da;font-weight:normal;transform:scaleX(0.935);transform-origin:center top;-webkit-text-stroke:0.3px #ccd2da;">13:40:40</div>
<div class="t" style="left:-76.09px;width:2000px;text-align:center;top:1521.79px;font-size:17.5px;color:#ccd2da;font-weight:normal;transform:scaleX(0.935);transform-origin:center top;-webkit-text-stroke:0.3px #ccd2da;">13:40:40</div>
<div class="t" style="left:18.66px;width:2000px;text-align:center;top:521.89px;font-size:17.5px;color:#ccd2da;font-weight:normal;transform:scaleX(0.935);transform-origin:center top;-webkit-text-stroke:0.3px #ccd2da;">13:40:50</div>
<div class="t" style="left:21.83px;width:2000px;text-align:center;top:1521.79px;font-size:17.5px;color:#ccd2da;font-weight:normal;transform:scaleX(0.935);transform-origin:center top;-webkit-text-stroke:0.3px #ccd2da;">13:40:50</div>
<div class="t" style="left:116.72px;width:2000px;text-align:center;top:521.89px;font-size:17.5px;color:#ccd2da;font-weight:normal;transform:scaleX(0.935);transform-origin:center top;-webkit-text-stroke:0.3px #ccd2da;">13:41:00</div>
<div class="t" style="left:119.74px;width:2000px;text-align:center;top:1521.79px;font-size:17.5px;color:#ccd2da;font-weight:normal;transform:scaleX(0.935);transform-origin:center top;-webkit-text-stroke:0.3px #ccd2da;">13:41:00</div>
<div class="t" style="left:214.78px;width:2000px;text-align:center;top:521.89px;font-size:17.5px;color:#ccd2da;font-weight:normal;transform:scaleX(0.935);transform-origin:center top;-webkit-text-stroke:0.3px #ccd2da;">13:41:10</div>
<div class="t" style="left:217.65px;width:2000px;text-align:center;top:1521.79px;font-size:17.5px;color:#ccd2da;font-weight:normal;transform:scaleX(0.935);transform-origin:center top;-webkit-text-stroke:0.3px #ccd2da;">13:41:10</div>
<div class="t" style="left:312.84px;width:2000px;text-align:center;top:521.89px;font-size:17.5px;color:#ccd2da;font-weight:normal;transform:scaleX(0.935);transform-origin:center top;-webkit-text-stroke:0.3px #ccd2da;">13:41:20</div>
<div class="t" style="left:315.57px;width:2000px;text-align:center;top:1521.79px;font-size:17.5px;color:#ccd2da;font-weight:normal;transform:scaleX(0.935);transform-origin:center top;-webkit-text-stroke:0.3px #ccd2da;">13:41:20</div>
<div class="t" style="left:410.91px;width:2000px;text-align:center;top:521.89px;font-size:17.5px;color:#ccd2da;font-weight:normal;transform:scaleX(0.935);transform-origin:center top;-webkit-text-stroke:0.3px #ccd2da;">13:41:30</div>
<div class="t" style="left:413.48px;width:2000px;text-align:center;top:1521.79px;font-size:17.5px;color:#ccd2da;font-weight:normal;transform:scaleX(0.935);transform-origin:center top;-webkit-text-stroke:0.3px #ccd2da;">13:41:30</div>
<div class="t" style="left:508.97px;width:2000px;text-align:center;top:521.89px;font-size:17.5px;color:#ccd2da;font-weight:normal;transform:scaleX(0.935);transform-origin:center top;-webkit-text-stroke:0.3px #ccd2da;">13:41:40</div>
<div class="t" style="left:511.40px;width:2000px;text-align:center;top:1521.79px;font-size:17.5px;color:#ccd2da;font-weight:normal;transform:scaleX(0.935);transform-origin:center top;-webkit-text-stroke:0.3px #ccd2da;">13:41:40</div>
<div class="t" style="left:607.03px;width:2000px;text-align:center;top:521.89px;font-size:17.5px;color:#ccd2da;font-weight:normal;transform:scaleX(0.935);transform-origin:center top;-webkit-text-stroke:0.3px #ccd2da;">13:41:50</div>
<div class="t" style="left:609.31px;width:2000px;text-align:center;top:1521.79px;font-size:17.5px;color:#ccd2da;font-weight:normal;transform:scaleX(0.935);transform-origin:center top;-webkit-text-stroke:0.3px #ccd2da;">13:41:50</div>
<div class="t" style="left:705.09px;width:2000px;text-align:center;top:521.89px;font-size:17.5px;color:#ccd2da;font-weight:normal;transform:scaleX(0.935);transform-origin:center top;-webkit-text-stroke:0.3px #ccd2da;">13:42:00</div>
<div class="t" style="left:707.22px;width:2000px;text-align:center;top:1521.79px;font-size:17.5px;color:#ccd2da;font-weight:normal;transform:scaleX(0.935);transform-origin:center top;-webkit-text-stroke:0.3px #ccd2da;">13:42:00</div>
<div class="t" style="left:803.15px;width:2000px;text-align:center;top:521.89px;font-size:17.5px;color:#ccd2da;font-weight:normal;transform:scaleX(0.935);transform-origin:center top;-webkit-text-stroke:0.3px #ccd2da;">13:42:10</div>
<div class="t" style="left:805.14px;width:2000px;text-align:center;top:1521.79px;font-size:17.5px;color:#ccd2da;font-weight:normal;transform:scaleX(0.935);transform-origin:center top;-webkit-text-stroke:0.3px #ccd2da;">13:42:10</div>
<div class="t" style="left:901.22px;width:2000px;text-align:center;top:521.89px;font-size:17.5px;color:#ccd2da;font-weight:normal;transform:scaleX(0.935);transform-origin:center top;-webkit-text-stroke:0.3px #ccd2da;">13:42:20</div>
<div class="t" style="left:903.05px;width:2000px;text-align:center;top:1521.79px;font-size:17.5px;color:#ccd2da;font-weight:normal;transform:scaleX(0.935);transform-origin:center top;-webkit-text-stroke:0.3px #ccd2da;">13:42:20</div>
<div class="t" style="left:999.28px;width:2000px;text-align:center;top:521.89px;font-size:17.5px;color:#ccd2da;font-weight:normal;transform:scaleX(0.935);transform-origin:center top;-webkit-text-stroke:0.3px #ccd2da;">13:42:30</div>
<div class="t" style="left:1000.97px;width:2000px;text-align:center;top:1521.79px;font-size:17.5px;color:#ccd2da;font-weight:normal;transform:scaleX(0.935);transform-origin:center top;-webkit-text-stroke:0.3px #ccd2da;">13:42:30</div>
<div class="t" style="left:1097.34px;width:2000px;text-align:center;top:521.89px;font-size:17.5px;color:#ccd2da;font-weight:normal;transform:scaleX(0.935);transform-origin:center top;-webkit-text-stroke:0.3px #ccd2da;">13:42:40</div>
<div class="t" style="left:1098.88px;width:2000px;text-align:center;top:1521.79px;font-size:17.5px;color:#ccd2da;font-weight:normal;transform:scaleX(0.935);transform-origin:center top;-webkit-text-stroke:0.3px #ccd2da;">13:42:40</div>
<div class="t" style="left:1195.40px;width:2000px;text-align:center;top:521.89px;font-size:17.5px;color:#ccd2da;font-weight:normal;transform:scaleX(0.935);transform-origin:center top;-webkit-text-stroke:0.3px #ccd2da;">13:42:50</div>
<div class="t" style="left:1196.79px;width:2000px;text-align:center;top:1521.79px;font-size:17.5px;color:#ccd2da;font-weight:normal;transform:scaleX(0.935);transform-origin:center top;-webkit-text-stroke:0.3px #ccd2da;">13:42:50</div>
<div class="t" style="left:1293.46px;width:2000px;text-align:center;top:521.89px;font-size:17.5px;color:#ccd2da;font-weight:normal;transform:scaleX(0.935);transform-origin:center top;-webkit-text-stroke:0.3px #ccd2da;">13:43:00</div>
<div class="t" style="left:1294.71px;width:2000px;text-align:center;top:1521.79px;font-size:17.5px;color:#ccd2da;font-weight:normal;transform:scaleX(0.935);transform-origin:center top;-webkit-text-stroke:0.3px #ccd2da;">13:43:00</div>
<div class="t" style="left:1391.53px;width:2000px;text-align:center;top:521.89px;font-size:17.5px;color:#ccd2da;font-weight:normal;transform:scaleX(0.935);transform-origin:center top;-webkit-text-stroke:0.3px #ccd2da;">13:43:10</div>
<div class="t" style="left:1392.62px;width:2000px;text-align:center;top:1521.79px;font-size:17.5px;color:#ccd2da;font-weight:normal;transform:scaleX(0.935);transform-origin:center top;-webkit-text-stroke:0.3px #ccd2da;">13:43:10</div>
<div class="t" style="left:1489.59px;width:2000px;text-align:center;top:521.89px;font-size:17.5px;color:#ccd2da;font-weight:normal;transform:scaleX(0.935);transform-origin:center top;-webkit-text-stroke:0.3px #ccd2da;">13:43:20</div>
<div class="t" style="left:1490.54px;width:2000px;text-align:center;top:1521.79px;font-size:17.5px;color:#ccd2da;font-weight:normal;transform:scaleX(0.935);transform-origin:center top;-webkit-text-stroke:0.3px #ccd2da;">13:43:20</div>
<div class="t" style="left:1587.65px;width:2000px;text-align:center;top:521.89px;font-size:17.5px;color:#ccd2da;font-weight:normal;transform:scaleX(0.935);transform-origin:center top;-webkit-text-stroke:0.3px #ccd2da;">13:43:30</div>
<div class="t" style="left:1588.45px;width:2000px;text-align:center;top:1521.79px;font-size:17.5px;color:#ccd2da;font-weight:normal;transform:scaleX(0.935);transform-origin:center top;-webkit-text-stroke:0.3px #ccd2da;">13:43:30</div>
<div class="t" style="left:1685.71px;width:2000px;text-align:center;top:521.89px;font-size:17.5px;color:#ccd2da;font-weight:normal;transform:scaleX(0.935);transform-origin:center top;-webkit-text-stroke:0.3px #ccd2da;">13:43:40</div>
<div class="t" style="left:1686.36px;width:2000px;text-align:center;top:1521.79px;font-size:17.5px;color:#ccd2da;font-weight:normal;transform:scaleX(0.935);transform-origin:center top;-webkit-text-stroke:0.3px #ccd2da;">13:43:40</div>
<div class="t" style="left:1783.77px;width:2000px;text-align:center;top:521.89px;font-size:17.5px;color:#ccd2da;font-weight:normal;transform:scaleX(0.935);transform-origin:center top;-webkit-text-stroke:0.3px #ccd2da;">13:43:50</div>
<div class="t" style="left:1784.28px;width:2000px;text-align:center;top:1521.79px;font-size:17.5px;color:#ccd2da;font-weight:normal;transform:scaleX(0.935);transform-origin:center top;-webkit-text-stroke:0.3px #ccd2da;">13:43:50</div>
<div class="t" style="left:1881.84px;width:2000px;text-align:center;top:521.89px;font-size:17.5px;color:#ccd2da;font-weight:normal;transform:scaleX(0.935);transform-origin:center top;-webkit-text-stroke:0.3px #ccd2da;">13:44:00</div>
<div class="t" style="left:1882.19px;width:2000px;text-align:center;top:1521.79px;font-size:17.5px;color:#ccd2da;font-weight:normal;transform:scaleX(0.935);transform-origin:center top;-webkit-text-stroke:0.3px #ccd2da;">13:44:00</div>
<div class="t" style="left:1979.90px;width:2000px;text-align:center;top:521.89px;font-size:17.5px;color:#ccd2da;font-weight:normal;transform:scaleX(0.935);transform-origin:center top;-webkit-text-stroke:0.3px #ccd2da;">13:44:10</div>
<div class="t" style="left:1980.11px;width:2000px;text-align:center;top:1521.79px;font-size:17.5px;color:#ccd2da;font-weight:normal;transform:scaleX(0.935);transform-origin:center top;-webkit-text-stroke:0.3px #ccd2da;">13:44:10</div>
<div class="t" style="right:392.40px;top:555.45px;font-size:16.6px;color:#5ba4e6;font-weight:bold;transform:scaleX(0.975);transform-origin:right top;">min</div>
<div class="t" style="right:268.30px;top:555.45px;font-size:16.6px;color:#5ba4e6;font-weight:bold;transform:scaleX(0.975);transform-origin:right top;">max</div>
<div class="t" style="right:144.80px;top:555.45px;font-size:16.6px;color:#5ba4e6;font-weight:bold;transform:scaleX(0.975);transform-origin:right top;">avg</div>
<div class="t" style="right:20.20px;top:555.45px;font-size:16.6px;color:#5ba4e6;font-weight:bold;transform:scaleX(0.975);transform-origin:right top;">current</div>
<div class="t" style="left:88.50px;top:586.94px;font-size:18.2px;color:#d7d8da;font-weight:normal;transform:scaleX(0.9126);transform-origin:left top;-webkit-text-stroke:0.3px #d7d8da;">{peer_dns_reversed="shoot--ash-garden--mz-neem.etcd-main-0", pod="etcd-main-1"}</div>
<div class="t" style="right:392.40px;top:587.84px;font-size:17.5px;color:#ccd2da;font-weight:normal;transform:scaleX(1.0);transform-origin:right top;-webkit-text-stroke:0.3px #ccd2da;">10.48 KiB/s</div>
<div class="t" style="right:268.30px;top:587.84px;font-size:17.5px;color:#ccd2da;font-weight:normal;transform:scaleX(1.0);transform-origin:right top;-webkit-text-stroke:0.3px #ccd2da;">20.90 KiB/s</div>
<div class="t" style="right:144.80px;top:587.84px;font-size:17.5px;color:#ccd2da;font-weight:normal;transform:scaleX(1.0);transform-origin:right top;-webkit-text-stroke:0.3px #ccd2da;">14.17 KiB/s</div>
<div class="t" style="right:20.20px;top:587.84px;font-size:17.5px;color:#ccd2da;font-weight:normal;transform:scaleX(1.0);transform-origin:right top;-webkit-text-stroke:0.3px #ccd2da;">20.23 KiB/s</div>
<div class="t" style="left:88.50px;top:623.79px;font-size:18.2px;color:#d7d8da;font-weight:normal;transform:scaleX(0.9126);transform-origin:left top;-webkit-text-stroke:0.3px #d7d8da;">{peer_dns_reversed="shoot--ash-garden--mz-neem.etcd-main-0", pod="etcd-main-2"}</div>
<div class="t" style="right:392.40px;top:624.69px;font-size:17.5px;color:#ccd2da;font-weight:normal;transform:scaleX(1.0);transform-origin:right top;-webkit-text-stroke:0.3px #ccd2da;">1.34 KiB/s</div>
<div class="t" style="right:268.30px;top:624.69px;font-size:17.5px;color:#ccd2da;font-weight:normal;transform:scaleX(1.0);transform-origin:right top;-webkit-text-stroke:0.3px #ccd2da;">1.74 KiB/s</div>
<div class="t" style="right:144.80px;top:624.69px;font-size:17.5px;color:#ccd2da;font-weight:normal;transform:scaleX(1.0);transform-origin:right top;-webkit-text-stroke:0.3px #ccd2da;">1.64 KiB/s</div>
<div class="t" style="right:20.20px;top:624.69px;font-size:17.5px;color:#ccd2da;font-weight:normal;transform:scaleX(1.0);transform-origin:right top;-webkit-text-stroke:0.3px #ccd2da;">1.73 KiB/s</div>
<div class="t" style="left:88.50px;top:660.64px;font-size:18.2px;color:#d7d8da;font-weight:normal;transform:scaleX(0.9126);transform-origin:left top;-webkit-text-stroke:0.3px #d7d8da;">{peer_dns_reversed="shoot--ash-garden--mz-neem.etcd-main-1", pod="etcd-main-0"}</div>
<div class="t" style="right:392.40px;top:661.54px;font-size:17.5px;color:#ccd2da;font-weight:normal;transform:scaleX(1.0);transform-origin:right top;-webkit-text-stroke:0.3px #ccd2da;">11.18 KiB/s</div>
<div class="t" style="right:268.30px;top:661.54px;font-size:17.5px;color:#ccd2da;font-weight:normal;transform:scaleX(1.0);transform-origin:right top;-webkit-text-stroke:0.3px #ccd2da;">21.56 KiB/s</div>
<div class="t" style="right:144.80px;top:661.54px;font-size:17.5px;color:#ccd2da;font-weight:normal;transform:scaleX(1.0);transform-origin:right top;-webkit-text-stroke:0.3px #ccd2da;">15.48 KiB/s</div>
<div class="t" style="right:20.20px;top:661.54px;font-size:17.5px;color:#ccd2da;font-weight:normal;transform:scaleX(1.0);transform-origin:right top;-webkit-text-stroke:0.3px #ccd2da;">19.88 KiB/s</div>
<div class="t" style="left:88.50px;top:697.49px;font-size:18.2px;color:#d7d8da;font-weight:normal;transform:scaleX(0.9126);transform-origin:left top;-webkit-text-stroke:0.3px #d7d8da;">{peer_dns_reversed="shoot--ash-garden--mz-neem.etcd-main-1", pod="etcd-main-2"}</div>
<div class="t" style="right:392.40px;top:698.39px;font-size:17.5px;color:#ccd2da;font-weight:normal;transform:scaleX(1.0);transform-origin:right top;-webkit-text-stroke:0.3px #ccd2da;">9.47 KiB/s</div>
<div class="t" style="right:268.30px;top:698.39px;font-size:17.5px;color:#ccd2da;font-weight:normal;transform:scaleX(1.0);transform-origin:right top;-webkit-text-stroke:0.3px #ccd2da;">17.97 KiB/s</div>
<div class="t" style="right:144.80px;top:698.39px;font-size:17.5px;color:#ccd2da;font-weight:normal;transform:scaleX(1.0);transform-origin:right top;-webkit-text-stroke:0.3px #ccd2da;">13.56 KiB/s</div>
<div class="t" style="right:20.20px;top:698.39px;font-size:17.5px;color:#ccd2da;font-weight:normal;transform:scaleX(1.0);transform-origin:right top;-webkit-text-stroke:0.3px #ccd2da;">16.06 KiB/s</div>
<div class="t" style="left:88.50px;top:734.34px;font-size:18.2px;color:#d7d8da;font-weight:normal;transform:scaleX(0.9126);transform-origin:left top;-webkit-text-stroke:0.3px #d7d8da;">{peer_dns_reversed="shoot--ash-garden--mz-neem.etcd-main-2", pod="etcd-main-0"}</div>
<div class="t" style="right:392.40px;top:735.24px;font-size:17.5px;color:#ccd2da;font-weight:normal;transform:scaleX(1.0);transform-origin:right top;-webkit-text-stroke:0.3px #ccd2da;">1.34 KiB/s</div>
<div class="t" style="right:268.30px;top:735.24px;font-size:17.5px;color:#ccd2da;font-weight:normal;transform:scaleX(1.0);transform-origin:right top;-webkit-text-stroke:0.3px #ccd2da;">1.74 KiB/s</div>
<div class="t" style="right:144.80px;top:735.24px;font-size:17.5px;color:#ccd2da;font-weight:normal;transform:scaleX(1.0);transform-origin:right top;-webkit-text-stroke:0.3px #ccd2da;">1.63 KiB/s</div>
<div class="t" style="right:20.20px;top:735.24px;font-size:17.5px;color:#ccd2da;font-weight:normal;transform:scaleX(1.0);transform-origin:right top;-webkit-text-stroke:0.3px #ccd2da;">1.35 KiB/s</div>
<div class="t" style="left:88.50px;top:771.19px;font-size:18.2px;color:#d7d8da;font-weight:normal;transform:scaleX(0.9126);transform-origin:left top;-webkit-text-stroke:0.3px #d7d8da;">{peer_dns_reversed="shoot--ash-garden--mz-neem.etcd-main-2", pod="etcd-main-1"}</div>
<div class="t" style="right:392.40px;top:772.09px;font-size:17.5px;color:#ccd2da;font-weight:normal;transform:scaleX(1.0);transform-origin:right top;-webkit-text-stroke:0.3px #ccd2da;">7.17 KiB/s</div>
<div class="t" style="right:268.30px;top:772.09px;font-size:17.5px;color:#ccd2da;font-weight:normal;transform:scaleX(1.0);transform-origin:right top;-webkit-text-stroke:0.3px #ccd2da;">14.14 KiB/s</div>
<div class="t" style="right:144.80px;top:772.09px;font-size:17.5px;color:#ccd2da;font-weight:normal;transform:scaleX(1.0);transform-origin:right top;-webkit-text-stroke:0.3px #ccd2da;">9.44 KiB/s</div>
<div class="t" style="right:20.20px;top:772.09px;font-size:17.5px;color:#ccd2da;font-weight:normal;transform:scaleX(1.0);transform-origin:right top;-webkit-text-stroke:0.3px #ccd2da;">13.44 KiB/s</div>
<div class="t" style="right:345.40px;top:1555.25px;font-size:16.6px;color:#5ba4e6;font-weight:bold;transform:scaleX(0.975);transform-origin:right top;">min</div>
<div class="t" style="right:217.30px;top:1555.25px;font-size:16.6px;color:#5ba4e6;font-weight:bold;transform:scaleX(0.975);transform-origin:right top;">max</div>
<div class="t" style="right:89.70px;top:1555.25px;font-size:16.6px;color:#5ba4e6;font-weight:bold;transform:scaleX(0.975);transform-origin:right top;">avg</div>
<div class="t" style="right:20.70px;top:1555.25px;font-size:16.6px;color:#5ba4e6;font-weight:bold;transform:scaleX(0.975);transform-origin:right top;">current</div>
<div class="t" style="left:95.70px;top:1585.89px;font-size:18.2px;color:#d7d8da;font-weight:normal;transform:scaleX(0.9126);transform-origin:left top;-webkit-text-stroke:0.3px #d7d8da;">{direction="ingress", peer_dns_reversed="shoot--ash-garden--mz-neem.etcd-main-2", pod="etcd-client"}</div>
<div class="t" style="right:345.40px;top:1587.49px;font-size:17.5px;color:#ccd2da;font-weight:normal;transform:scaleX(1.0);transform-origin:right top;-webkit-text-stroke:0.3px #ccd2da;">9 KiB/s</div>
<div class="t" style="right:217.30px;top:1587.49px;font-size:17.5px;color:#ccd2da;font-weight:normal;transform:scaleX(1.0);transform-origin:right top;-webkit-text-stroke:0.3px #ccd2da;">31.59 MiB/s</div>
<div class="t" style="right:89.70px;top:1587.49px;font-size:17.5px;color:#ccd2da;font-weight:normal;transform:scaleX(1.0);transform-origin:right top;-webkit-text-stroke:0.3px #ccd2da;">14.32 MiB/s</div>
<div class="t" style="left:1301.00px;width:2000px;text-align:center;top:954.70px;font-size:17.6px;color:#ccd0d8;font-weight:bold;transform:scaleX(0.983);transform-origin:center top;">2022-06-09 13:43:45</div>
<div class="t" style="left:1855.30px;top:983.09px;font-size:17.5px;color:#ffffff;font-weight:bold;transform:scaleX(0.9046);transform-origin:left top;">{direction="ingress", peer_dns_reversed="shoot--ash-garden--mz-neem.etcd-main-2", pod="etcd-client"}:</div>
<div class="t" style="right:301.00px;top:983.79px;font-size:17.5px;color:#ffffff;font-weight:bold;transform:scaleX(0.98);transform-origin:right top;">31.59 MiB/s</div>
</div>
</body></html>
